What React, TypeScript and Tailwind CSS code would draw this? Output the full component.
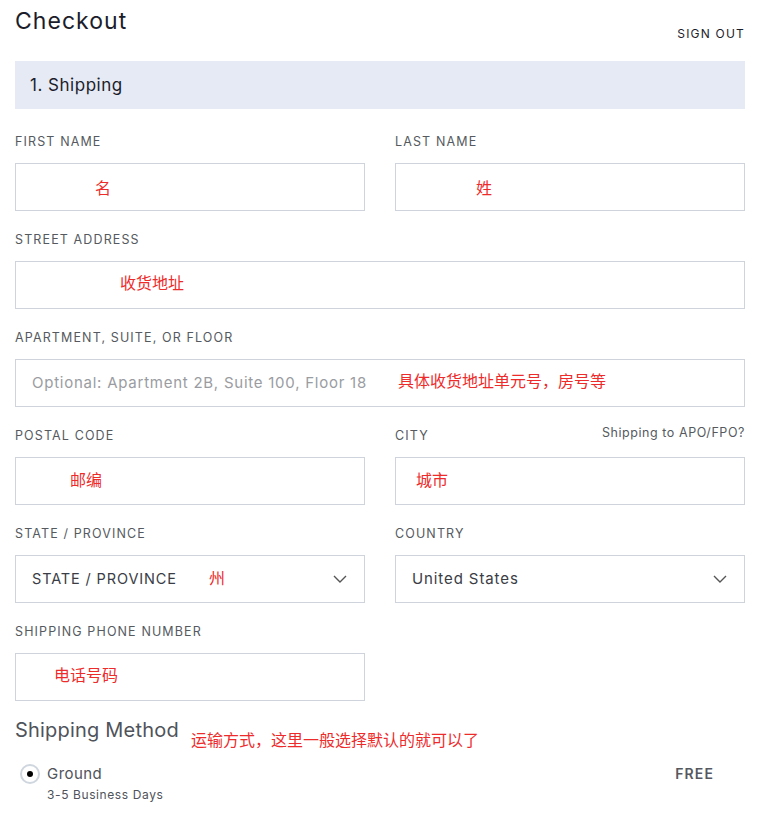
import React from "react";

const sans = "font-['Inter','Noto_Sans_CJK_SC',sans-serif]";
const cjk = "font-['Noto_Sans_CJK_SC',sans-serif] text-[16px] leading-5 text-[#ee2b2b]";

function Label({ children, aside }: { children: React.ReactNode; aside?: React.ReactNode }) {
    return (
        <div className="flex h-5 items-end justify-between mb-3">
            <span className="text-[12.5px] leading-[18px] uppercase tracking-[0.09em] text-[#555a60]">{children}</span>
            {aside}
        </div>
    );
}

function Box({ children, className }: { children?: React.ReactNode; className?: string }) {
    return (
        <div className={`flex h-12 items-center border border-[#cfd3db] bg-white pl-4 pr-4 ${className ?? ""}`}>
            {children}
        </div>
    );
}

function Chevron() {
    return (
        <svg className="ml-auto mr-[1px]" width="14" height="8" viewBox="0 0 14 8" fill="none">
            <path d="M1 1l6 6 6-6" stroke="#555" strokeWidth="1.4" />
        </svg>
    );
}

export default function App() {
    return (
        <div className={`${sans} w-[761px] bg-white text-[#1c1d2b]`}>
            <div className="ml-[15px] w-[730px]">
                <div className="flex h-[61px] justify-between">
                    <h1 className="pt-[7px] text-[23px] leading-7 tracking-[0.045em]">Checkout</h1>
                    <span className="mt-[26px] text-[12px] leading-4 tracking-[0.1em]">SIGN OUT</span>
                </div>
                <div className="flex h-12 items-center bg-[#e6eaf5] pl-[15px] pt-[1px] text-[17px] tracking-[0.03em]">1. Shipping</div>

                <div className="mt-[22px] grid grid-cols-2 gap-x-[30px] gap-y-[18px]">
                    <div>
                        <Label>First Name</Label>
                        <Box><span className={`${cjk} ml-[63px]`}>名</span></Box>
                    </div>
                    <div>
                        <Label>Last Name</Label>
                        <Box><span className={`${cjk} ml-[64px]`}>姓</span></Box>
                    </div>
                    <div className="col-span-2">
                        <Label>Street Address</Label>
                        <Box><span className={`${cjk} ml-[88px] mb-[6px]`}>收货地址</span></Box>
                    </div>
                    <div className="col-span-2">
                        <Label>Apartment, Suite, or Floor</Label>
                        <Box>
                            <span className="w-[366px] text-[15px] tracking-[0.05em] text-[#9a9ca2]">Optional: Apartment 2B, Suite 100, Floor 18</span>
                            <span className={`${cjk} mb-[6px]`}>具体收货地址单元号，房号等</span>
                        </Box>
                    </div>
                    <div>
                        <Label>Postal Code</Label>
                        <Box><span className={`${cjk} ml-[38px] mb-[4px]`}>邮编</span></Box>
                    </div>
                    <div>
                        <Label aside={<span className="text-[12.5px] leading-[18px] tracking-[0.045em] text-[#555a60] mb-[3px]">Shipping to APO/FPO?</span>}>City</Label>
                        <Box><span className={`${cjk} ml-[4px] mb-[4px]`}>城市</span></Box>
                    </div>
                    <div>
                        <Label>State / Province</Label>
                        <Box>
                            <span className="w-[177px] text-[14.5px] tracking-[0.06em] text-[#3a3d45]">STATE / PROVINCE</span>
                            <span className={`${cjk} mb-[4px]`}>州</span>
                            <Chevron />
                        </Box>
                    </div>
                    <div>
                        <Label>Country</Label>
                        <Box>
                            <span className="text-[15px] tracking-[0.06em] text-[#3a3d45]">United States</span>
                            <Chevron />
                        </Box>
                    </div>
                    <div>
                        <Label>Shipping Phone Number</Label>
                        <Box><span className={`${cjk} ml-[22px] mb-[6px]`}>电话号码</span></Box>
                    </div>
                </div>

                <div className="mt-[15px] flex items-start">
                    <h2 className="text-[20px] leading-7 tracking-[0.01em] text-[#4f535a]">Shipping Method</h2>
                    <span className={`${cjk} ml-[12px] mt-[13px]`}>运输方式，这里一般选择默认的就可以了</span>
                </div>

                <div className="mt-[15px] flex items-start">
                    <div className="ml-[5px] flex h-5 w-5 items-center justify-center rounded-full border-2 border-[#cfd6de]">
                        <div className="h-[6px] w-[6px] rounded-full bg-black" />
                    </div>
                    <div className="ml-[7px]">
                        <div className="text-[15px] leading-5 tracking-[0.03em] text-[#4f535a]">Ground</div>
                        <div className="mt-[3px] text-[12px] leading-4 tracking-[0.05em] text-[#4f535a]">3-5 Business Days</div>
                    </div>
                    <span className="ml-auto mr-[31px] text-[14px] leading-5 font-semibold tracking-[0.08em] text-[#55585e]">FREE</span>
                </div>
                <div className="h-4" />
            </div>
        </div>
    );
}
